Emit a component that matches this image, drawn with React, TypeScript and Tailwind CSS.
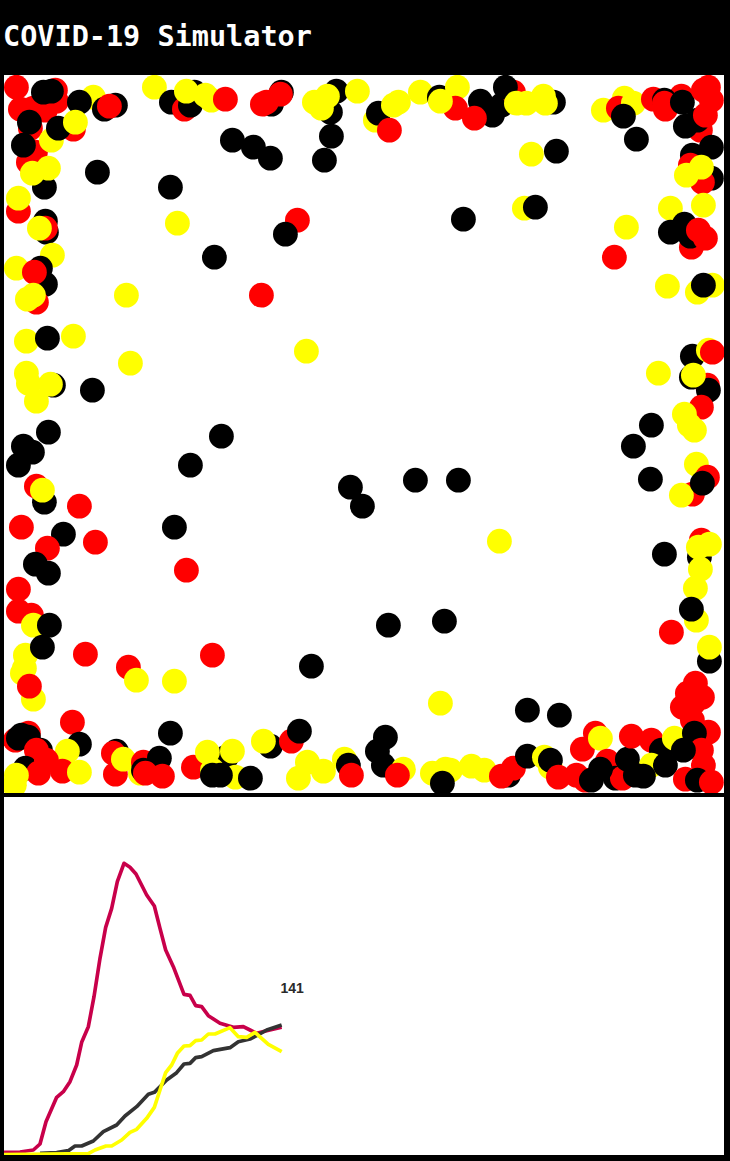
import React from 'react';

const R = '#ff0000';
const Y = '#ffff00';
const K = '#000000';

type Dot = [number, number, string];

// paint order matters, later dots sit on top
const dots: Dot[] = [
  // top left
  [16, 87, R], [55, 90, R], [20, 109, R], [33, 108, R], [45, 110, R], [56, 101, R], [43, 92, K], [51, 91, K],
  [93, 97, Y], [79, 102, K], [104, 109, K], [115, 105, K], [109, 106, R],
  [30, 128, R], [29, 122, K], [35, 152, R], [28, 162, R], [23, 145, K], [51, 140, Y],
  [73, 129, R], [58, 128, K], [75, 122, Y], [44, 187, K], [32, 173, Y], [48, 168, Y],
  [18, 211, R], [18, 198, Y], [45, 221, K], [46, 232, K], [45, 228, R], [39, 228, Y],
  [97, 172, K], [170, 187, K], [177, 223, Y],
  // top middle
  [154, 87, Y], [171, 102, K], [184, 109, R], [194, 92, K], [190, 105, K], [205, 95, Y], [211, 100, Y],
  [186, 91, Y], [225, 99, R], [271, 104, K], [262, 104, R], [266, 102, R], [281, 92, K], [280, 94, R],
  [232, 140, K], [253, 147, K], [270, 158, K], [324, 160, K], [331, 136, K],
  [336, 91, K], [330, 112, K], [314, 102, Y], [327, 96, Y], [321, 108, Y], [357, 91, Y],
  [297, 220, R], [285, 234, K], [214, 257, K],
  // top right half
  [375, 120, Y], [378, 113, K], [389, 130, R], [393, 105, Y], [398, 102, Y], [420, 92, Y],
  [439, 97, K], [457, 87, Y], [455, 108, R], [440, 101, Y], [480, 101, K], [492, 115, K], [501, 105, K],
  [474, 118, R], [513, 92, R], [505, 87, K], [553, 102, K], [516, 103, Y], [526, 103, Y], [543, 96, Y], [545, 103, Y],
  [531, 154, Y], [556, 151, K], [463, 219, K], [524, 208, Y], [535, 207, K],
  [603, 110, Y], [624, 98, Y], [618, 108, R], [633, 103, Y], [623, 116, K], [636, 139, K],
  [653, 99, R], [681, 96, R], [664, 100, K], [665, 109, R], [664, 103, R], [682, 102, K],
  [700, 130, R], [685, 126, K], [697, 120, K], [708, 87, R], [703, 90, R], [711, 100, R], [705, 115, R],
  [711, 147, K], [692, 155, K], [690, 165, R], [711, 178, K], [702, 182, R], [686, 175, Y], [701, 167, Y],
  [670, 208, Y], [703, 205, Y], [691, 247, R], [684, 224, K], [670, 232, K], [690, 236, K], [698, 230, R], [705, 238, R],
  [626, 227, Y], [614, 257, R], [667, 286, Y], [697, 292, Y], [712, 285, Y], [703, 285, K],
  // left side
  [16, 268, Y], [52, 255, Y], [40, 268, K], [45, 284, K], [34, 272, R], [36, 302, R], [27, 299, Y], [33, 295, Y],
  [126, 295, Y], [261, 295, R], [26, 341, Y], [47, 338, K], [73, 336, Y], [130, 363, Y], [306, 351, Y],
  [53, 385, K], [26, 373, Y], [28, 383, Y], [50, 384, Y], [36, 401, Y], [92, 390, K],
  [48, 432, K], [23, 446, K], [32, 452, K], [18, 465, K], [221, 436, K], [190, 465, K],
  [44, 502, K], [36, 486, R], [42, 490, Y], [79, 506, R], [350, 487, K], [362, 506, K],
  [21, 527, R], [63, 534, K], [174, 527, K], [47, 548, R], [95, 542, R], [35, 564, K], [48, 573, K], [186, 570, R],
  [18, 589, R], [18, 611, R], [31, 615, R], [33, 625, Y], [49, 625, K], [25, 655, Y], [42, 647, K], [24, 668, Y], [22, 673, Y],
  [33, 699, Y], [29, 686, R], [85, 654, R], [128, 667, R], [136, 680, Y], [174, 681, Y], [212, 655, R], [311, 666, K],
  // centre and right side
  [415, 480, K], [458, 480, K], [499, 541, Y], [658, 373, Y], [692, 356, K], [708, 350, Y], [712, 352, R],
  [707, 385, R], [708, 390, K], [691, 377, K], [693, 375, Y], [701, 407, R], [684, 414, Y], [689, 425, Y], [694, 430, Y],
  [651, 425, K], [633, 446, K], [696, 464, Y], [707, 477, R], [692, 494, R], [681, 495, Y], [702, 483, K], [650, 479, K],
  [664, 554, K], [701, 540, R], [699, 557, K], [698, 547, Y], [709, 544, Y], [700, 569, Y], [695, 588, Y],
  [696, 620, Y], [691, 609, K], [671, 632, R], [709, 661, K], [709, 647, Y],
  // bottom left
  [72, 722, R], [170, 733, K], [79, 744, K], [67, 751, Y], [15, 740, R], [18, 738, K], [28, 733, R], [21, 735, K], [28, 737, K],
  [40, 750, K], [36, 750, R], [25, 768, K], [46, 760, R], [38, 773, R], [62, 771, R], [79, 772, Y], [14, 785, Y], [16, 775, Y],
  [115, 774, R], [116, 751, K], [113, 753, R], [123, 759, Y], [140, 773, Y], [143, 762, R], [143, 770, K], [159, 758, K],
  [145, 773, R], [162, 776, R], [193, 767, R],
  [226, 757, K], [207, 752, Y], [232, 751, Y], [212, 770, Y], [212, 775, K], [235, 777, Y], [220, 775, K], [250, 778, K],
  [270, 746, K], [263, 741, Y], [291, 741, R], [299, 731, K], [307, 762, Y], [323, 771, Y], [298, 778, Y],
  [344, 759, Y], [348, 765, K], [351, 775, R],
  // bottom middle
  [388, 625, K], [444, 621, K], [440, 703, Y], [527, 710, K], [559, 715, K],
  [385, 737, K], [377, 751, K], [383, 765, K], [403, 769, Y], [397, 775, R],
  [432, 773, Y], [445, 769, Y], [450, 770, Y], [471, 766, Y], [484, 770, Y], [442, 783, K],
  [508, 775, K], [501, 776, R], [513, 768, R], [527, 756, K], [544, 757, Y], [550, 767, Y], [550, 760, K],
  // bottom right
  [558, 777, R], [576, 775, R], [582, 749, R], [595, 733, R], [600, 738, Y], [607, 761, R], [585, 780, R],
  [615, 778, K], [622, 778, R], [600, 769, K], [591, 780, K], [627, 759, K], [631, 736, R], [651, 740, R],
  [661, 750, K], [651, 765, Y], [635, 775, K], [643, 776, K], [665, 765, K], [674, 738, Y],
  [695, 683, R], [702, 697, R], [687, 693, R], [682, 707, R], [693, 703, R], [692, 720, R],
  [708, 732, R], [694, 733, K], [701, 750, R], [683, 750, K], [703, 765, R], [685, 779, R], [697, 780, K], [711, 782, R],
];

const magenta =
  '12,907 60,906 100,900 120,882 138,815 170,742 190,725 210,695 230,645 245,577 265,530 282,440 300,325 317,232 335,175 352,95 372,40 390,52 408,72 440,135 463,168 480,235 497,300 520,350 552,433 570,436 587,467 605,470 625,497 660,520 700,532 730,530 750,540 770,550 800,542 845,532';
const dark =
  '120,910 170,908 205,902 225,888 245,888 280,873 310,845 350,825 375,798 410,770 445,733 463,727 500,690 530,668 552,642 570,640 587,623 605,620 640,602 690,593 715,575 750,567 770,557 800,540 845,525';
const yellow =
  '12,914 265,911 285,900 318,888 335,888 365,870 390,847 410,838 440,805 463,772 480,720 497,668 515,645 532,610 552,588 570,587 587,572 605,570 625,552 645,552 690,533 715,560 740,562 765,547 805,583 845,605';

export default function App() {
  return (
    <div className="min-h-[1161px] bg-black px-1 pb-1.5">
      <h1 className="-ml-px flex h-[75px] items-center font-['DejaVu_Sans_Mono',monospace] text-[28.5px] font-bold text-white">
        COVID-19 Simulator
      </h1>

      <div className="h-[718px] w-[720px] bg-white">
        <svg viewBox="3.6 74.8 720 718" className="block h-full w-full">
          {dots.map(([x, y, fill], i) => (
            <circle key={i} cx={x} cy={y} r={12.4} fill={fill} />
          ))}
        </svg>
      </div>

      <div className="relative mt-1 h-[358px] w-[720px] bg-white">
        <svg viewBox="12 -159 2160 1074" className="block h-full w-full">
          <g fill="none" strokeWidth={11} strokeLinejoin="round">
            <polyline points={magenta} stroke="#c8004a" />
            <polyline points={dark} stroke="#333333" />
            <polyline points={yellow} stroke="#ffff00" />
          </g>
        </svg>
        <span className="absolute left-[276.5px] top-[182.5px] font-['Liberation_Sans',Arial,sans-serif] text-sm leading-4 font-bold text-[#2a2a2a]">
          141
        </span>
      </div>
    </div>
  );
}
